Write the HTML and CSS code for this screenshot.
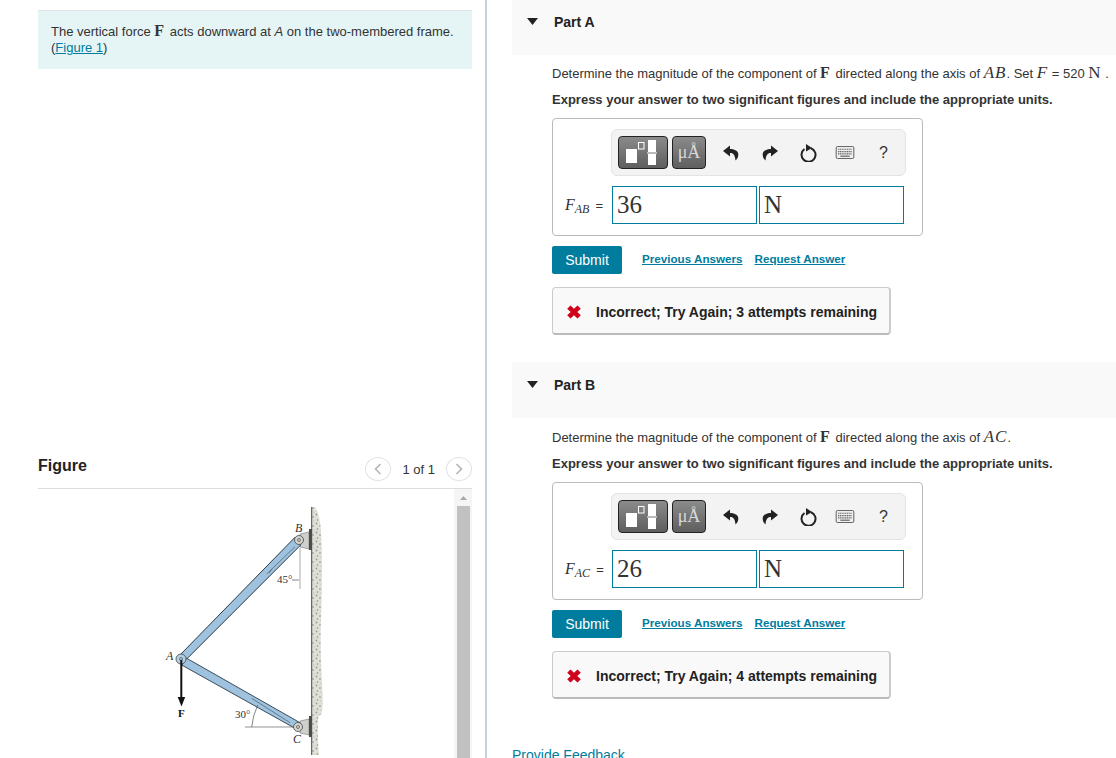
FILE: index.html
```html
<!DOCTYPE html>
<html lang="en">
<head>
<meta charset="utf-8">
<title>Two-membered frame</title>
<link rel="stylesheet" href="styles.css">
</head>
<body>
<svg class="defs" width="0" height="0" aria-hidden="true">
  <defs>
    <symbol id="i-template" viewBox="0 0 48 31">
      <rect x="7" y="12" width="11" height="14" fill="#fff"/>
      <rect x="19.500" y="5.500" width="5.500" height="6.500" fill="none" stroke="#fff" stroke-width="1"/>
      <rect x="29" y="3" width="8" height="12" fill="#fff"/>
      <rect x="28" y="15.500" width="10" height="1" fill="#fff"/>
      <rect x="29" y="17" width="8" height="11" fill="#fff"/>
    </symbol>
    <symbol id="i-undo" viewBox="0 0 16 16">
      <path d="M7 .5 0 6l7 5.500V8c3 0 5 1.500 5.500 7.500 2.200-2 3.200-4.500 2.700-7C14.700 5.500 11 4 7 4z" fill="#222"/>
    </symbol>
    <symbol id="i-redo" viewBox="0 0 16 16">
      <path d="M9 .5 16 6l-7 5.500V8c-3 0-5 1.500-5.500 7.500-2.200-2-3.200-4.500-2.700-7C1.300 5.500 5 4 9 4z" fill="#222"/>
    </symbol>
    <symbol id="i-reset" viewBox="0 0 18 18">
      <path d="M5.500 5a7 7 0 1 0 6.500-.8" fill="none" stroke="#222" stroke-width="2"/>
      <path d="M7 0l6 4-6 3.500z" fill="#222"/>
    </symbol>
    <symbol id="i-keys" viewBox="0 0 20 14">
      <rect x=".5" y=".5" width="19" height="13" rx="1.500" fill="#eee" stroke="#555"/>
      <path d="M2.500 3.500h15M2.500 6h15M2.500 8.500h15" stroke="#666" stroke-width="1.300" stroke-dasharray="1.300 .6"/>
      <path d="M5 11h10" stroke="#666" stroke-width="1.300"/>
    </symbol>
    <symbol id="i-x" viewBox="0 0 14 14">
      <path d="M3.500 .5 7 3.800 10.500 .5 13.800 3.800 10.300 7l3.500 3.200-3.300 3.300L7 10.200l-3.500 3.300L.2 10.200 3.700 7 .2 3.800z" fill="#d0021b"/>
    </symbol>
    <pattern id="gravel" width="7" height="9" patternUnits="userSpaceOnUse">
      <rect width="7" height="9" fill="#e0e0d8"/>
      <circle cx="1.500" cy="1.500" r=".9" fill="#999b97"/>
      <circle cx="5" cy="4" r="1" fill="#acaeaa"/>
      <circle cx="2.500" cy="7" r=".8" fill="#8e908c"/>
      <circle cx="6" cy="8" r=".6" fill="#b4b4ad"/>
    </pattern>
  </defs>
</svg>
<div class="page">
  <aside class="left">
    <div class="intro">
      The vertical force <b class="mb">F</b> acts downward at <i>A</i> on the two-membered frame.<br>
      (<a href="#fig">Figure 1</a>)
    </div>
    <div class="fig-head" id="fig">
      <h2>Figure</h2>
      <div class="pager">
        <span class="circle">
          <svg width="10" height="14" viewBox="0 0 10 14"><path d="M7.500 2 2.500 7l5 5" fill="none" stroke="#b5b5b5" stroke-width="1.600"/></svg>
        </span>
        <span class="count">1 of 1</span>
        <span class="circle">
          <svg width="10" height="14" viewBox="0 0 10 14"><path d="M2.500 2l5 5-5 5" fill="none" stroke="#b5b5b5" stroke-width="1.600"/></svg>
        </span>
      </div>
    </div>
    <div class="fig-body">
      <svg class="diagram" width="200" height="269" viewBox="140 489 200 269">
        <path d="M312 507h3q5 8 6 24t1 40-1 50 1 60-2 34-1 40h-7z" fill="url(#gravel)"/>
        <path d="M311.700 507v248" stroke="#444" stroke-width="1"/>
        <path d="M300 534l9-2v17l-9-2z" fill="#cfd0cc" stroke="#777" stroke-width=".6"/>
        <path d="M300 721l9-2v16l-9-2z" fill="#cfd0cc" stroke="#777" stroke-width=".6"/>
        <rect x="309" y="529" width="3" height="21" fill="#4c4c4c"/>
        <rect x="309" y="716" width="3" height="21" fill="#4c4c4c"/>
        <path d="M180 655 295 537.300l5.700 7.700L185 660.700z" fill="#9fc3de" stroke="#2c3b48" stroke-width="1"/>
        <path d="M186.700 658.300 300 722.700l-5 5.600L181.700 665z" fill="#9fc3de" stroke="#3b4c5a" stroke-width="1"/>
        <path d="M266.700 574 295 546.700M251.700 698.300 290 722.700" stroke="#47596a" stroke-width=".7"/>
        <circle cx="181" cy="659" r="5" fill="#b4d0e4" stroke="#444" stroke-width=".8"/>
        <circle cx="299" cy="540" r="4.500" fill="#d4d5d0" stroke="#444" stroke-width=".8"/>
        <circle cx="298" cy="727" r="4.500" fill="#d4d5d0" stroke="#444" stroke-width=".8"/>
        <circle cx="181" cy="659" r="1.500" fill="none" stroke="#333" stroke-width=".6"/>
        <circle cx="299" cy="540" r="1.500" fill="none" stroke="#333" stroke-width=".6"/>
        <circle cx="298" cy="727" r="1.500" fill="none" stroke="#333" stroke-width=".6"/>
        <path d="M181.300 660v38" stroke="#111" stroke-width="2"/>
        <path d="M177.700 697h7.500l-3.700 9.500z" fill="#111"/>
        <path d="M300 548v41" stroke="#aaa" stroke-width="1"/>
        <path d="M292 580h7M272 569l-3 4" stroke="#555" stroke-width=".7"/>
        <path d="M245 727h48" stroke="#666" stroke-width=".7"/>
        <path d="M257.700 705q-5 11-6 22" fill="none" stroke="#555" stroke-width=".7"/>
        <text class="fl" x="295" y="532">B</text>
        <text class="fl" x="166" y="660">A</text>
        <text class="fl" x="293" y="743">C</text>
        <text class="fb" x="178" y="717">F</text>
        <text class="fn" x="277" y="583">45°</text>
        <text class="fn" x="235" y="718">30°</text>
      </svg>
      <div class="scrollbar">
        <svg class="sb-arrow" width="9" height="6" viewBox="0 0 9 6"><path d="M4.500 1 8 5H1z" fill="#a9a9a9"/></svg>
        <div class="sb-thumb"></div>
      </div>
    </div>
  </aside>
  <main class="right">
    <section class="part first-part">
      <header class="part-head">
        <svg class="caret" width="11" height="7" viewBox="0 0 11 7"><path d="M0 0h11L5.500 7z" fill="#222"/></svg>
        <h3>Part A</h3>
      </header>
      <div class="part-body">
        <p class="q">Determine the magnitude of the component of <b class="mb">F</b> directed along the axis of <i class="ms">AB</i>. Set <i class="ms">F</i> = 520 <span class="ms">N</span> .</p>
        <p class="hint">Express your answer to two significant figures and include the appropriate units.</p>
        <div class="answer">
          <div class="toolbar">
            <span class="tbtn wide"><svg width="48" height="31"><use href="#i-template"/></svg></span>
            <span class="tbtn narrow">μÅ</span>
            <svg class="ti t-undo" width="16" height="16"><use href="#i-undo"/></svg>
            <svg class="ti t-redo" width="16" height="16"><use href="#i-redo"/></svg>
            <svg class="ti t-reset" width="18" height="18"><use href="#i-reset"/></svg>
            <svg class="ti t-keys" width="20" height="13"><use href="#i-keys"/></svg>
            <span class="help">?</span>
          </div>
          <div class="eq">
            <span class="lab"><i>F<sub>AB</sub></i> <span class="equals">=</span></span>
            <span class="field">36</span>
            <span class="field">N</span>
          </div>
        </div>
        <div class="actions">
          <span class="submit">Submit</span>
          <a class="act first" href="#a">Previous Answers</a>
          <a class="act" href="#b">Request Answer</a>
        </div>
        <div class="result">
          <svg width="14" height="14"><use href="#i-x"/></svg>
          <span>Incorrect; Try Again; 3 attempts remaining</span>
        </div>
      </div>
    </section>
    <section class="part second">
      <header class="part-head">
        <svg class="caret" width="11" height="7" viewBox="0 0 11 7"><path d="M0 0h11L5.500 7z" fill="#222"/></svg>
        <h3>Part B</h3>
      </header>
      <div class="part-body">
        <p class="q">Determine the magnitude of the component of <b class="mb">F</b> directed along the axis of <i class="ms">AC</i>.</p>
        <p class="hint">Express your answer to two significant figures and include the appropriate units.</p>
        <div class="answer">
          <div class="toolbar">
            <span class="tbtn wide"><svg width="48" height="31"><use href="#i-template"/></svg></span>
            <span class="tbtn narrow">μÅ</span>
            <svg class="ti t-undo" width="16" height="16"><use href="#i-undo"/></svg>
            <svg class="ti t-redo" width="16" height="16"><use href="#i-redo"/></svg>
            <svg class="ti t-reset" width="18" height="18"><use href="#i-reset"/></svg>
            <svg class="ti t-keys" width="20" height="13"><use href="#i-keys"/></svg>
            <span class="help">?</span>
          </div>
          <div class="eq">
            <span class="lab"><i>F<sub>AC</sub></i> <span class="equals">=</span></span>
            <span class="field">26</span>
            <span class="field">N</span>
          </div>
        </div>
        <div class="actions">
          <span class="submit">Submit</span>
          <a class="act first" href="#a">Previous Answers</a>
          <a class="act" href="#b">Request Answer</a>
        </div>
        <div class="result">
          <svg width="14" height="14"><use href="#i-x"/></svg>
          <span>Incorrect; Try Again; 4 attempts remaining</span>
        </div>
      </div>
    </section>
    <a class="feedback" href="#f">Provide Feedback</a>
  </main>
</div>
</body>
</html>
```
FILE: styles.css
```css
* { box-sizing: border-box; }
html, body { margin: 0; padding: 0; height: 758px; overflow: hidden; background: #fff; }
body { font-family: "Liberation Sans", Arial, sans-serif; font-size: 13px; color: #333; }
.defs { position: absolute; }
a { color: #007c9e; }
.page { display: flex; height: 758px; overflow: hidden; }

.left { width: 487px; flex: none; padding: 10px 13px 0 38px; border-right: 2px solid #c3d0e2; }
.intro { height: 59px; padding: 12px 13px 0; background: #e5f5f6; border-top: 1px solid #dde3e8; line-height: 16px; font-size: 13px; color: #333; }
.mb { padding-right: 2px; font-family: "Liberation Serif", serif; font-size: 16px; font-weight: 700; color: #333; line-height: 1; }
.fig-head { display: flex; align-items: flex-end; justify-content: space-between; height: 44px; margin-top: 376px; border-bottom: 1px solid #ddd; }
.fig-head h2 { margin: 0 0 13px; font-size: 16px; line-height: 18px; font-weight: 700; color: #222; }
.pager { display: flex; align-items: center; gap: 11px; margin: 0 0 7px; color: #333; font-size: 13px; }
.circle { display: flex; align-items: center; justify-content: center; width: 26px; height: 24px; border: 1px solid #e2e2e2; border-radius: 50%; }
.fig-body { display: flex; height: 269px; }
.diagram { margin-left: 102px; flex: none; }
.scrollbar { margin-left: 114px; width: 18px; display: flex; flex-direction: column; align-items: center; background: #f5f5f5; height: 269px; }
.sb-arrow { margin: 6px 0 5px; }
.sb-thumb { width: 13px; flex: 1; background: #c1c1c1; }

.right { flex: 1; padding-left: 25px; min-width: 0; }
.first-part { margin-top: -1px; }
.part-head { display: flex; align-items: flex-start; height: 56px; background: #f9f9f9; padding: 16px 0 0 15px; }
.caret { margin-top: 3px; }
.part-head h3 { margin: 0 0 0 16px; font-size: 14px; font-weight: 700; color: #222; line-height: 15px; }
.part-body { padding: 0 0 0 40px; }
.second .part-body { padding-top: 1px; }
.q { margin: 0; padding-top: 9px; height: 35px; line-height: 17px; color: #333; white-space: nowrap; }
.ms { font-family: "Liberation Serif", serif; font-size: 17px; letter-spacing: 1px; line-height: 1; }
.hint { margin: 0; height: 28px; padding-top: 2px; font-weight: 700; color: #333; line-height: 16px; white-space: nowrap; }
.answer { width: 371px; height: 118px; border: 1px solid #bbb; border-radius: 4px; padding: 10px 16px 0 58px; }
.toolbar { display: flex; align-items: center; width: 295px; height: 47px; background: #f3f3f3; border: 1px solid #e4e4e4; border-radius: 6px; padding-left: 6px; }
.tbtn { display: flex; align-items: center; justify-content: center; flex: none; height: 33px; border: 1px solid #222; border-radius: 4px; background: linear-gradient(#8b8b8b, #5e5e5e); }
.wide { width: 50px; }
.narrow { width: 34px; margin-left: 4px; font-family: "Liberation Serif", serif; font-size: 18px; color: #d8d8d8; }
.ti { flex: none; }
.t-undo { margin-left: 17px; }
.t-redo { margin-left: 23px; }
.t-reset { margin-left: 21px; }
.t-keys { margin-left: 18px; }
.help { margin-left: 24px; font-size: 16px; color: #333; }
.eq { display: flex; align-items: center; margin: 10px 0 0 -46px; gap: 2px; }
.lab { width: 45px; font-family: "Liberation Serif", serif; font-size: 16px; color: #333; white-space: nowrap; }
.lab sub { font-size: 12px; vertical-align: -3px; line-height: 0; }
.equals { font-family: "Liberation Sans", sans-serif; font-size: 13px; margin-left: 2px; }
.field { width: 145px; height: 38px; border: 1px solid #007c9e; padding-left: 4px; font-family: "Liberation Serif", serif; font-size: 25px; line-height: 36px; color: #333; }
.actions { display: flex; align-items: center; margin-top: 10px; height: 28px; }
.submit { display: flex; align-items: center; justify-content: center; width: 70px; height: 28px; background: #007c9e; border-radius: 2px; color: #fff; font-size: 14px; }
.act { margin-bottom: 4px; font-size: 11.650px; font-weight: 700; margin-left: 12px; }
.act.first { margin-left: 20px; }
.result { display: flex; align-items: center; gap: 15px; width: 339px; height: 48px; margin-top: 13px; padding: 2px 0 0 14px; border: 1px solid #ccc; border-bottom: 2px solid #bbb; border-right: 2px solid #ccc; border-radius: 4px; background: #f9f9f9; font-weight: 700; font-size: 14px; color: #222; white-space: nowrap; }
.second { margin-top: 27px; }
.feedback { display: block; margin-top: 48px; color: #007c9e; font-size: 14px; line-height: 16px; text-decoration: none; width: 113px; white-space: nowrap; }
.fl { font: italic 12px "Liberation Serif", serif; fill: #333; }
.fb { font: bold 11px "Liberation Serif", serif; fill: #111; }
.fn { font: 11px "Liberation Serif", serif; fill: #333; }
```
